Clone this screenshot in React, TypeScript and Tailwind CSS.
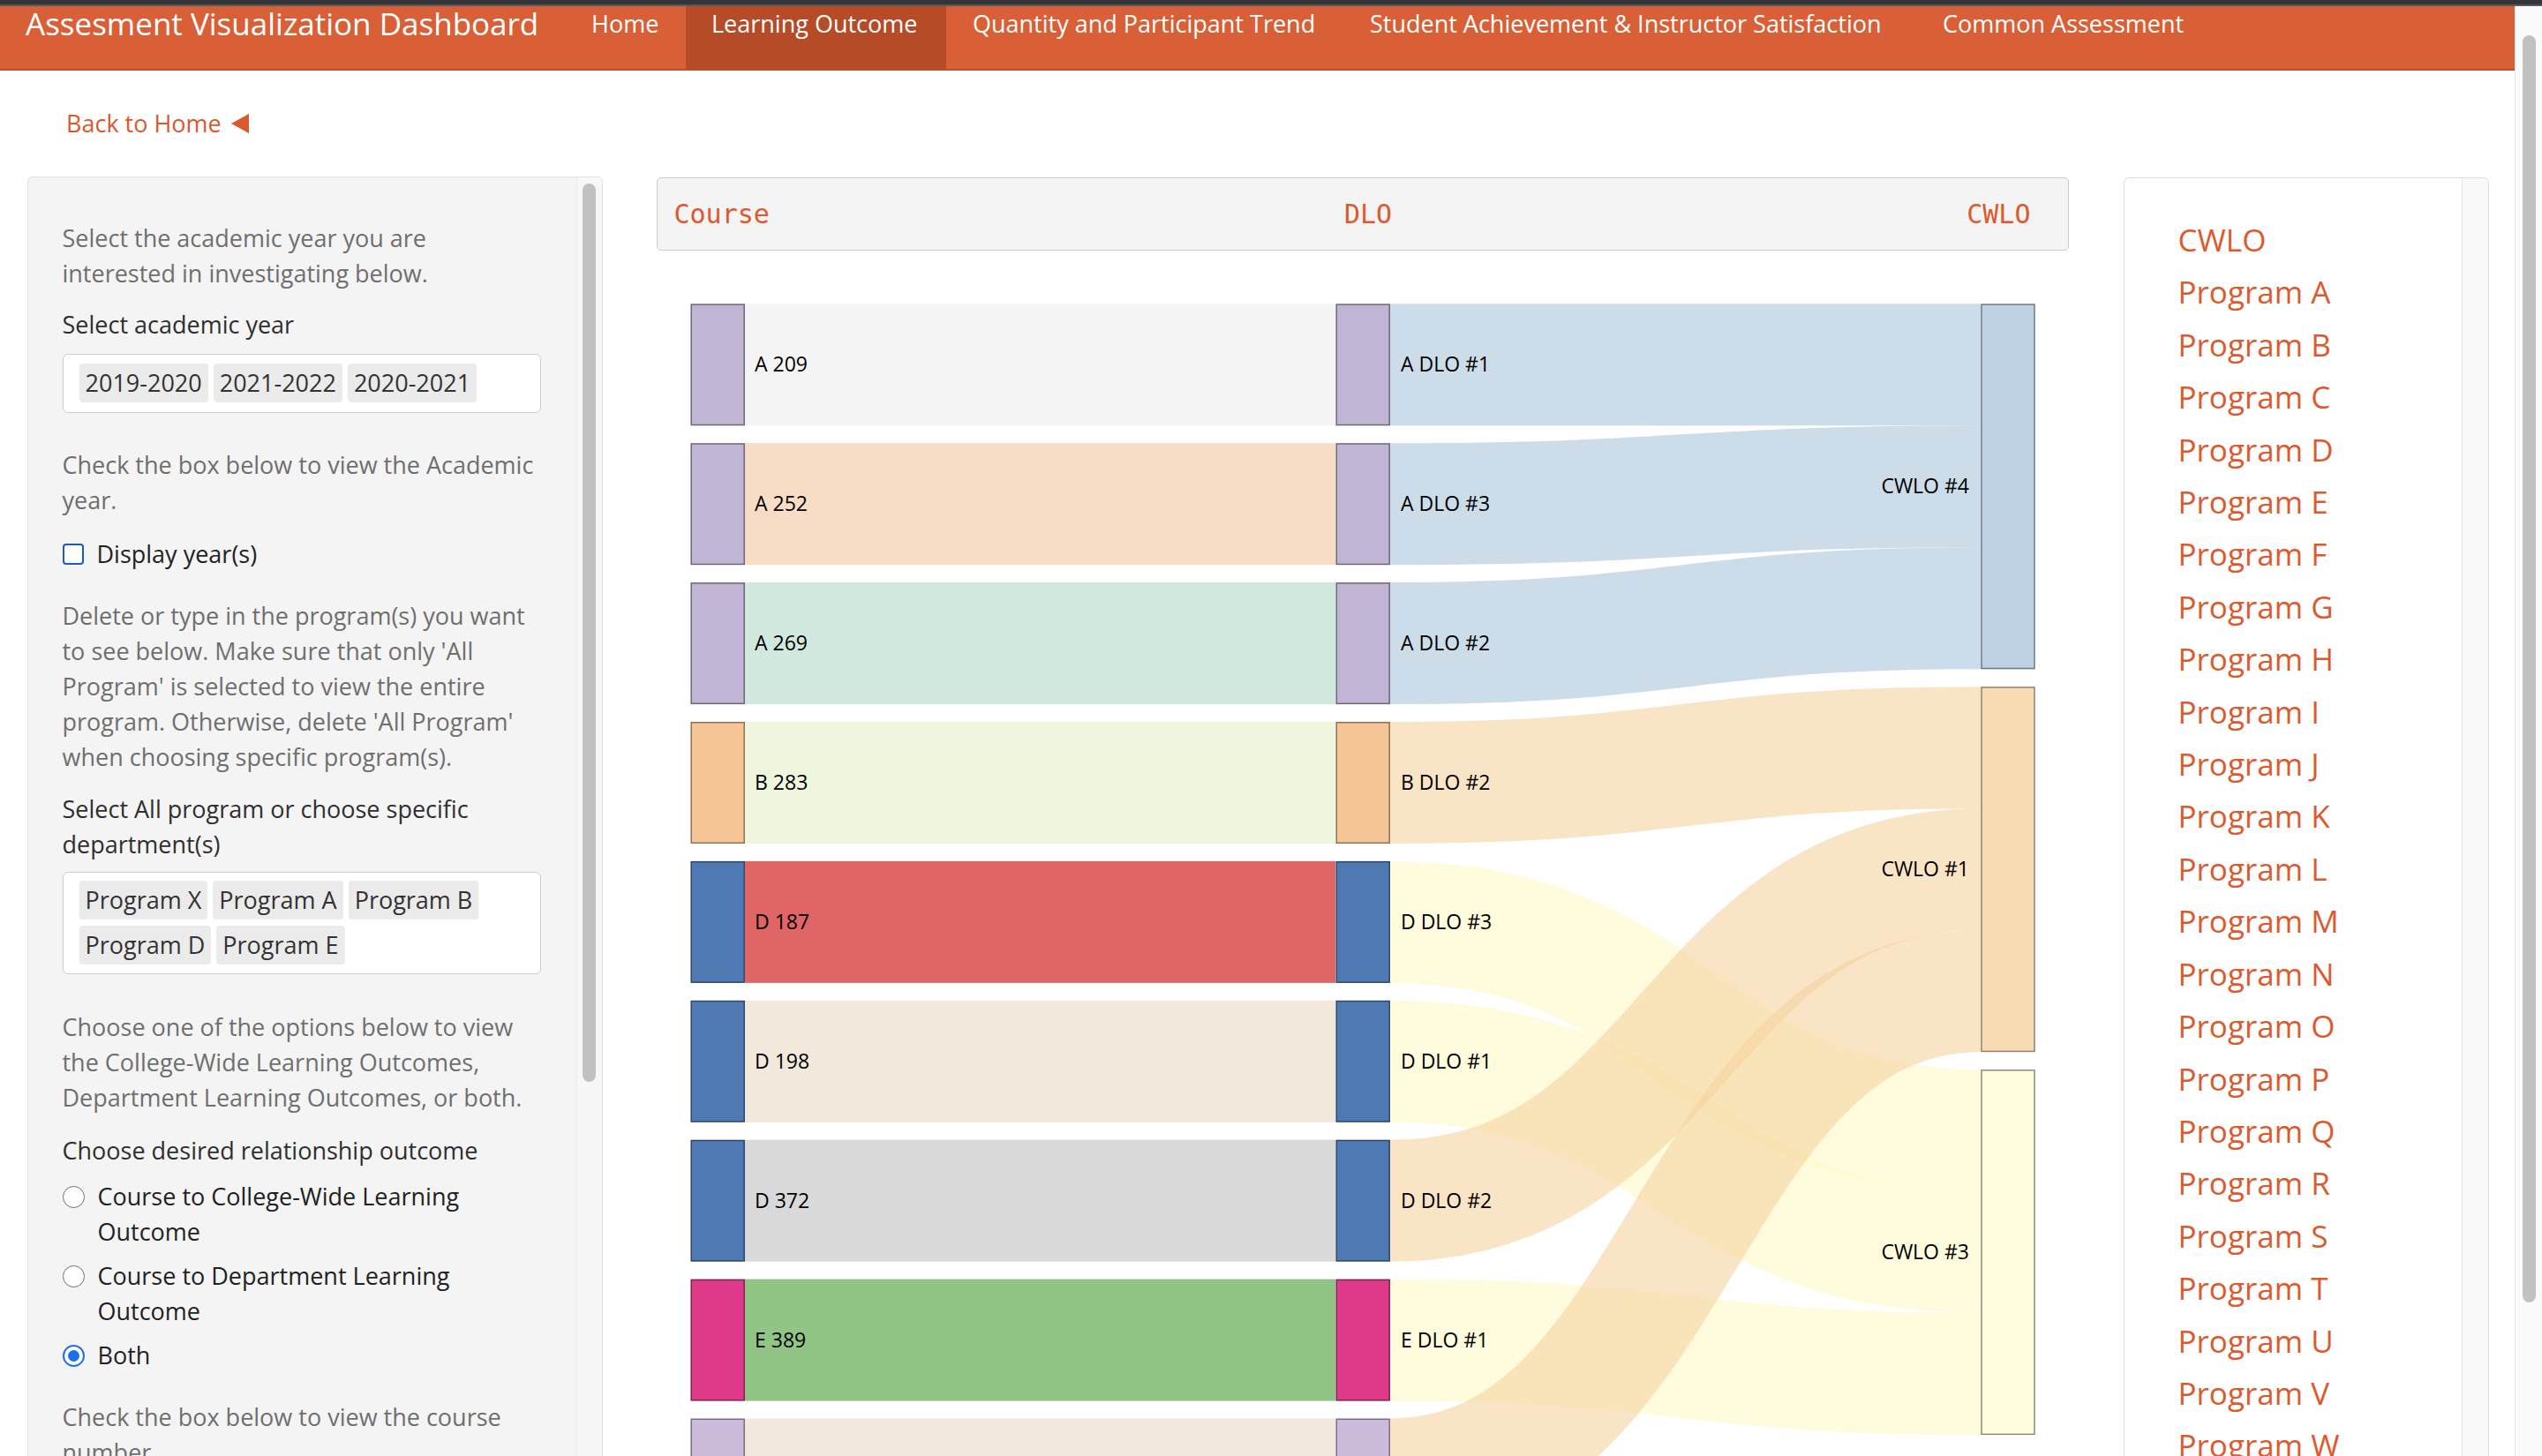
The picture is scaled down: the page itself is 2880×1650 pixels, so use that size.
import React from "react";

const H = 138;
const STEP = 157.9;
const TOP = 60.3;
const CW_STEP = 3 * H + 19.9;

type Course = { label?: string; fill: string; stroke: string; link: string };

const courses: Course[] = [
  { label: "A 209", fill: "#c1b5d6", stroke: "#6c6677", link: "#f4f4f4" },
  { label: "A 252", fill: "#c1b5d6", stroke: "#6c6677", link: "#f7ddc6" },
  { label: "A 269", fill: "#c1b5d6", stroke: "#6c6677", link: "#d0e8dd" },
  { label: "B 283", fill: "#f6c595", stroke: "#8e7256", link: "#eef6de" },
  { label: "D 187", fill: "#4f79b3", stroke: "#2e4766", link: "#e06666" },
  { label: "D 198", fill: "#4f79b3", stroke: "#2e4766", link: "#f2e8dc" },
  { label: "D 372", fill: "#4f79b3", stroke: "#2e4766", link: "#d9d9d9" },
  { label: "E 389", fill: "#dd3a8b", stroke: "#7f2250", link: "#91c585" },
  { fill: "#cabcda", stroke: "#776f80", link: "#f2e8dd" },
];

// dlo -> [cwlo index, slot]
const dlos = [
  { label: "A DLO #1", to: 0, slot: 0 },
  { label: "A DLO #3", to: 0, slot: 1 },
  { label: "A DLO #2", to: 0, slot: 2 },
  { label: "B DLO #2", to: 1, slot: 0 },
  { label: "D DLO #3", to: 2, slot: 0 },
  { label: "D DLO #1", to: 2, slot: 1 },
  { label: "D DLO #2", to: 1, slot: 1 },
  { label: "E DLO #1", to: 2, slot: 2 },
  { label: "", to: 1, slot: 2 },
];

const cwlos = [
  { label: "CWLO #4", fill: "#bfd2e3", stroke: "#6e7884", link: "#aac5da" },
  { label: "CWLO #1", fill: "#f8dab3", stroke: "#8d806f", link: "#f5d2a0" },
  { label: "CWLO #3", fill: "#fffddc", stroke: "#8b8a7c", link: "#fdfac5" },
];

const programs = [
  "CWLO",
  ...Array.from("ABCDEFGHIJKLMNOPQRSTUVWXYZ").map((c) => `Program ${c}`),
];

function Sankey() {
  const x0 = 831;
  const x1 = 1500;
  const xm = (x0 + x1) / 2;
  // draw blue, then yellow, then peach
  const order = [0, 2, 1];

  return (
    <svg width="1600" height="1380" className="block font-['Open_Sans',sans-serif]">
      {courses.map((c, i) => (
        <rect key={`cl${i}`} x={100} y={TOP + i * STEP} width={669} height={H} fill={c.link} />
      ))}
      {order.map((k) =>
        dlos.map((d, i) =>
          d.to !== k ? null : (
            <path
              key={`dl${i}`}
              d={`M${x0},${TOP + i * STEP + H / 2} C${xm},${TOP + i * STEP + H / 2} ${xm},${
                TOP + k * CW_STEP + d.slot * H + H / 2
              } ${x1},${TOP + k * CW_STEP + d.slot * H + H / 2}`}
              fill="none"
              stroke={cwlos[k].link}
              strokeOpacity={0.6}
              strokeWidth={H}
            />
          )
        )
      )}
      {courses.map((c, i) => (
        <g key={`n${i}`}>
          <rect x={39.2} y={TOP + i * STEP + 0.75} width={60} height={H - 1.5} fill={c.fill} stroke={c.stroke} strokeWidth={1.5} />
          <rect x={770.2} y={TOP + i * STEP + 0.75} width={60} height={H - 1.5} fill={c.fill} stroke={c.stroke} strokeWidth={1.5} />
          {c.label && (
            <text x={111} y={TOP + i * STEP + H / 2} dy="0.35em" fontSize={23} fill="#000">
              {c.label}
            </text>
          )}
          {dlos[i].label && (
            <text x={843} y={TOP + i * STEP + H / 2} dy="0.35em" fontSize={23} fill="#000">
              {dlos[i].label}
            </text>
          )}
        </g>
      ))}
      {cwlos.map((c, k) => (
        <g key={`c${k}`}>
          <rect x={1501} y={TOP + k * CW_STEP + 0.75} width={60} height={3 * H - 1.5} fill={c.fill} stroke={c.stroke} strokeWidth={1.5} />
          <text x={1487} y={TOP + k * CW_STEP + (3 * H) / 2} dy="0.35em" fontSize={23} textAnchor="end" fill="#000">
            {c.label}
          </text>
        </g>
      ))}
    </svg>
  );
}

function Chip({ children }: { children: React.ReactNode }) {
  return (
    <span className="h-[44px] px-[7px] leading-[44px] rounded-[4px] bg-[#ebebeb] text-[#333] whitespace-nowrap">
      {children}
    </span>
  );
}

function Radio({ checked, lines }: { checked?: boolean; lines: string[] }) {
  return (
    <div className="flex items-start gap-[15px] text-[#222]">
      {checked ? (
        <div className="mt-[8px] w-[25px] h-[25px] shrink-0 rounded-full border-[2.5px] border-[#1f6fe5] bg-white flex items-center justify-center">
          <div className="w-[13px] h-[13px] rounded-full bg-[#1f6fe5]" />
        </div>
      ) : (
        <div className="mt-[8px] w-[25px] h-[25px] shrink-0 rounded-full border-[1.5px] border-[#6f6f6f] bg-white" />
      )}
      <div>
        {lines.map((l) => (
          <div key={l} className="whitespace-nowrap">
            {l}
          </div>
        ))}
      </div>
    </div>
  );
}

function Lines({ lines, className }: { lines: string[]; className?: string }) {
  return (
    <div className={className}>
      {lines.map((l) => (
        <div key={l} className="whitespace-nowrap">
          {l}
        </div>
      ))}
    </div>
  );
}

export default function App(): React.ReactElement {
  return (
    <div className="w-[2880px] h-[1650px] overflow-hidden bg-white font-['Open_Sans',sans-serif]">
      <div className="h-[5px] bg-[#343539]" />
      <div className="h-[2px] bg-[#56575b]" />
      <div className="flex">
        <div className="w-[2849px] shrink-0">
          {/* navbar */}
          <nav className="flex h-[73px] bg-[#d95f36] border-b-2 border-[#c24c27] text-white leading-[40px]">
            <div className="w-[641px] pl-[29px] text-[35px] whitespace-nowrap">Assesment Visualization Dashboard</div>
            <div className="w-[136px] pl-[29px] text-[27px] whitespace-nowrap">Home</div>
            <div className="w-[295px] pl-[29px] text-[27px] whitespace-nowrap bg-[#b54b27]">Learning Outcome</div>
            <div className="w-[450px] pl-[30px] text-[27px] whitespace-nowrap">Quantity and Participant Trend</div>
            <div className="w-[649px] pl-[30px] text-[27px] whitespace-nowrap">
              Student Achievement &amp; Instructor Satisfaction
            </div>
            <div className="w-[332px] pl-[30px] text-[27px] whitespace-nowrap">Common Assessment</div>
          </nav>

          <div className="mt-[39.5px] pl-[75px] flex items-center gap-[11px] text-[27px] leading-[40px] text-[#dc582d]">
            <span>Back to Home</span>
            <svg width="20" height="22" viewBox="0 0 20 22">
              <polygon points="0,11 20,0 20,22" fill="#dc582d" />
            </svg>
          </div>

          <div className="mt-[40.5px] pl-[30.5px] flex items-start">
            {/* sidebar */}
            <aside className="w-[652px] h-[1500px] shrink-0 flex bg-[#f4f4f4] border border-[#e3e3e3] rounded-[5px] overflow-hidden text-[27px] leading-[40px]">
              <div className="flex-1 pl-[39px] pr-[40px] pt-[48.5px]">
                <Lines className="text-[#6f6f6f]" lines={["Select the academic year you are", "interested in investigating below."]} />
                <div className="mt-[18.5px] text-[#2f2f2f]">Select academic year</div>
                <div className="mt-[13px] h-[67px] bg-white border-[1.5px] border-[#cccccc] rounded-[6px] pl-[18px] pt-[9.5px] flex gap-[6px]">
                  <Chip>2019-2020</Chip>
                  <Chip>2021-2022</Chip>
                  <Chip>2020-2021</Chip>
                </div>
                <Lines className="mt-[38.5px] text-[#6f6f6f]" lines={["Check the box below to view the Academic", "year."]} />
                <div className="mt-[21px] flex items-center gap-[15px] text-[#222]">
                  <div className="w-[24px] h-[24px] rounded-[4px] border-[2.5px] border-[#1d5bc4] bg-white" />
                  <span>Display year(s)</span>
                </div>
                <Lines
                  className="mt-[30px] text-[#6f6f6f]"
                  lines={[
                    "Delete or type in the program(s) you want",
                    "to see below. Make sure that only 'All",
                    "Program' is selected to view the entire",
                    "program. Otherwise, delete 'All Program'",
                    "when choosing specific program(s).",
                  ]}
                />
                <Lines className="mt-[19px] text-[#2f2f2f]" lines={["Select All program or choose specific", "department(s)"]} />
                <div className="mt-[11px] h-[116px] bg-white border-[1.5px] border-[#cccccc] rounded-[6px] pl-[18px] pt-[9.5px] flex flex-wrap content-start gap-x-[6px] gap-y-[6.5px]">
                  <Chip>Program X</Chip>
                  <Chip>Program A</Chip>
                  <Chip>Program B</Chip>
                  <Chip>Program D</Chip>
                  <Chip>Program E</Chip>
                </div>
                <Lines
                  className="mt-[40px] text-[#6f6f6f]"
                  lines={[
                    "Choose one of the options below to view",
                    "the College-Wide Learning Outcomes,",
                    "Department Learning Outcomes, or both.",
                  ]}
                />
                <div className="mt-[20.5px] text-[#2f2f2f]">Choose desired relationship outcome</div>
                <div className="mt-[12px]">
                  <Radio lines={["Course to College-Wide Learning", "Outcome"]} />
                </div>
                <div className="mt-[10px]">
                  <Radio lines={["Course to Department Learning", "Outcome"]} />
                </div>
                <div className="mt-[10px]">
                  <Radio checked lines={["Both"]} />
                </div>
                <Lines className="mt-[30px] text-[#6f6f6f]" lines={["Check the box below to view the course", "number"]} />
              </div>
              <div className="w-[29px] shrink-0 border-l border-[#ebebeb] bg-[#f7f7f7]">
                <div className="ml-[6px] mt-[7px] w-[15px] h-[1018px] rounded-full bg-[#c1c1c1]" />
              </div>
            </aside>

            {/* chart */}
            <div className="ml-[61.5px] mt-[1px] w-[1600px] shrink-0">
              <div className="h-[83px] bg-[#f4f4f4] border-[1.5px] border-[#cccccc] rounded-[5px] flex items-center justify-between pl-[18.5px] pr-[42.5px] font-['DejaVu_Sans_Mono',monospace] text-[30px] text-[#dc5a2e]">
                <span>Course</span>
                <span>DLO</span>
                <span>CWLO</span>
              </div>
              <Sankey />
            </div>

            {/* program list */}
            <div className="ml-[62px] mt-[1px] w-[414px] h-[1500px] shrink-0 flex bg-white border-[1.5px] border-[#dcdcdc] rounded-[6px] overflow-hidden">
              <ul className="flex-1 pl-[60.5px] pt-[40px] text-[35px] leading-[59.4px] text-[#dc5a2e]">
                {programs.map((p) => (
                  <li key={p} className="whitespace-nowrap">
                    {p}
                  </li>
                ))}
              </ul>
              <div className="w-[30px] shrink-0 bg-[#f9f9f9] border-l-[1.5px] border-[#e6e6e6]" />
            </div>
          </div>
        </div>

        {/* page scrollbar */}
        <div className="w-[31px] h-[1643px] shrink-0 bg-[#fbfbfb] border-l border-[#e6e6e6]">
          <div className="ml-[8px] mt-[33px] w-[15px] h-[1436px] rounded-full bg-[#c1c1c1]" />
        </div>
      </div>
    </div>
  );
}
